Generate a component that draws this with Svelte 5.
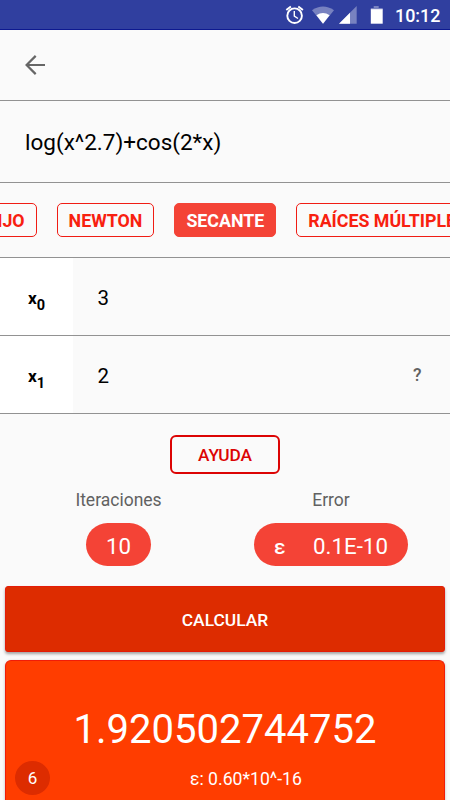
<script>
    let expression = 'log(x^2.7)+cos(2*x)';
    let selected = 'SECANTE';
    const methods = ['PUNTO FIJO', 'NEWTON', 'SECANTE', 'RAÍCES MÚLTIPLES'];

    let points = [
        { index: 0, value: '3', help: false },
        { index: 1, value: '2', help: true }
    ];
</script>

<div class="screen">
    <div class="status">
        <svg class="status__icons" width="106" height="29" viewBox="0 0 106 29">
            <g fill="none" stroke="#fff" stroke-width="1.9">
                <circle cx="9.6" cy="15.7" r="7.3" />
                <path d="M9.3 11v5.2l3.7 2.3" stroke-width="1.4" />
                <path d="M1.3 10.1l4.6-3.7M17.9 10.1l-4.6-3.7" />
            </g>
            <path d="M27 10.2Q38 2.7 49 10.2L38 23.7z" fill="#fff" fill-opacity=".35" />
            <path d="M31.4 15.2Q38 10.6 44.6 15.2L38 23.7z" fill="#fff" />
            <path d="M71.7 6v17.7H54z" fill="#fff" fill-opacity=".35" />
            <path d="M65 12.7v11H54z" fill="#fff" />
            <path d="M88.7 6h5v2h4v2.3H85.8V8h2.9z" fill="#fff" fill-opacity=".35" />
            <path d="M85.8 9.2h11.9v14.5H85.8z" fill="#fff" />
        </svg>
        <span class="status__time">10:12</span>
    </div>

    <div class="toolbar">
        <svg width="21" height="20" viewBox="0 0 21 20" fill="none" stroke="#666" stroke-width="2.2">
            <path d="M20 10H2M10.7 .9L1.6 10l9.1 9.1" />
        </svg>
    </div>

    <div class="expression">{expression}</div>

    <div class="methods">
        <div class="methods__list">
            {#each methods as method}
                <button class="method" class:method--active={method === selected} on:click={() => selected = method}>{method}</button>
            {/each}
        </div>
    </div>

    {#each points as point}
        <div class="point">
            <div class="point__label">x<span class="point__index">{point.index}</span></div>
            <div class="point__value">{point.value}</div>
            {#if point.help}
                <div class="point__help">?</div>
            {/if}
        </div>
    {/each}

    <button class="help">AYUDA</button>

    <div class="options">
        <div class="option option--iterations">
            <span class="option__name">Iteraciones</span>
            <div class="pill">10</div>
        </div>
        <div class="option option--error">
            <span class="option__name">Error</span>
            <div class="pill"><span class="pill__epsilon">ε</span>0.1E-10</div>
        </div>
    </div>

    <button class="calculate">CALCULAR</button>

    <div class="result">
        <div class="result__value">1.920502744752</div>
        <div class="result__footer">
            <span class="result__count">6</span>
            <span class="result__error">ε: 0.60*10^-16</span>
        </div>
    </div>
</div>

<style>
    :global(body) {
        background: #fafafa;
    }

    .screen {
        width: 450px;
        height: 800px;
        overflow: hidden;
        display: flex;
        flex-direction: column;
        background: #fafafa;
        font-family: Roboto, sans-serif;
        color: #000;
    }
    .screen * {
        box-sizing: border-box;
        flex-shrink: 0;
    }

    button {
        font-family: inherit;
        margin: 0;
        padding: 0;
    }

    .status {
        height: 30px;
        display: flex;
        background: #303f9f;
        border-bottom: 1px solid #0d1990;
        padding-left: 285px;
        color: #fff;
    }
    .status__time {
        margin-left: 4px;
        font-size: 17.9px;
        font-weight: 500;
        line-height: 31px;
    }

    .toolbar {
        height: 71px;
        padding: 25px 0 0 25px;
        border-bottom: 1px solid #929292;
    }

    .expression {
        height: 82px;
        padding-left: 25px;
        border-bottom: 1px solid #929292;
        font-size: 22.5px;
        line-height: 83px;
    }

    .methods {
        height: 75px;
        border-bottom: 1px solid #929292;
        overflow: hidden;
    }
    .methods__list {
        display: flex;
        gap: 20px;
        margin: 20px 0 0 -87.5px;
    }
    .method {
        height: 34px;
        padding: 1px 11px 0;
        border: 1px solid #f01c14;
        border-radius: 5px;
        background: #fafafa;
        color: #f8200f;
        font-size: 17.8px;
        font-weight: 700;
    }
    .method--active {
        border-color: #f44336;
        background: #f44336;
        color: #fff;
    }

    .point {
        height: 78px;
        display: flex;
        align-items: center;
        border-bottom: 1px solid #929292;
    }
    .point__label {
        width: 73px;
        height: 77px;
        padding-left: 28px;
        background: #fff;
        font-size: 17.3px;
        font-weight: 700;
        line-height: 80px;
    }
    .point__index {
        position: relative;
        top: 6px;
        font-size: 14.5px;
    }
    .point__value {
        flex: 1;
        padding: 2px 0 0 24.5px;
        font-size: 20.5px;
    }
    .point__help {
        width: 37px;
        color: #616161;
        font-size: 17.5px;
        font-weight: 500;
    }

    .help {
        align-self: center;
        width: 110px;
        height: 39px;
        margin: 21px 0 1px;
        padding-top: 1px;
        border: 2px solid #dc0404;
        border-radius: 6px;
        background: #fafafa;
        color: #dc0404;
        font-size: 17.3px;
        font-weight: 500;
    }

    .options {
        display: flex;
        height: 111px;
    }
    .option {
        display: flex;
        flex-direction: column;
        align-items: center;
    }
    .option--iterations {
        width: 237px;
    }
    .option--error {
        width: 188px;
    }
    .option__name {
        height: 48px;
        padding-top: 14px;
        color: #616161;
        font-size: 17.5px;
        line-height: 22px;
    }
    .pill {
        height: 43px;
        padding: 0 20px;
        border-radius: 22px;
        background: #f44336;
        color: #fff;
        font-size: 22.3px;
        line-height: 46px;
    }
    .pill__epsilon {
        margin-right: 27.5px;
        font-size: 21px;
        font-weight: 500;
    }

    .calculate {
        height: 66px;
        margin: 0 5px;
        padding-top: 2px;
        border: 1px solid #e41c08;
        border-radius: 3px;
        background: #dd2c00;
        box-shadow: 0 2px 3px rgba(0, 0, 0, .35);
        color: #fff;
        font-size: 17.4px;
        font-weight: 500;
    }

    .result {
        height: 145px;
        margin: 8px 5px 0;
        border: 1px solid #f01c08;
        border-bottom: 0;
        border-radius: 6px 6px 0 0;
        background: #ff3d00;
        box-shadow: 0 1px 3px rgba(0, 0, 0, .25);
        color: #fff;
    }
    .result__value {
        height: 100px;
        padding-top: 44px;
        font-size: 40px;
        line-height: 50px;
        text-align: center;
    }
    .result__footer {
        display: flex;
        align-items: center;
        padding-left: 9px;
    }
    .result__count {
        width: 35px;
        height: 34px;
        border-radius: 50%;
        background: #dd2c00;
        font-size: 17px;
        line-height: 35px;
        text-align: center;
    }
    .result__error {
        margin-left: 140px;
        padding-top: 1px;
        font-size: 17.6px;
    }
</style>
